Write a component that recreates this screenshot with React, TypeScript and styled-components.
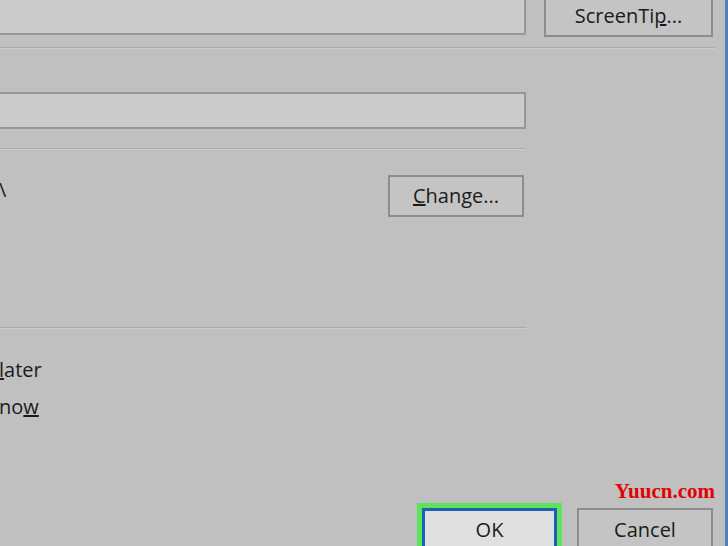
import styled, { createGlobalStyle } from 'styled-components';

const GlobalStyle = createGlobalStyle`
  html, body {
    margin: 0;
    padding: 0;
    background: #c0c0c0;
    overflow: hidden;
  }
`;

const Page = styled.div`
  width: 728px;
  height: 546px;
  display: flex;
  overflow: hidden;
  background: #c0c0c0;
  font-family: 'Open Sans', 'Noto Sans', sans-serif;
  font-size: 20px;
  font-weight: 500;
  color: #1b1b1b;
`;

const Dialog = styled.div`
  flex: 1;
  display: flex;
  flex-direction: column;
  border-right: 3px solid #4b82ba;
`;

const TopRow = styled.div`
  display: flex;
  align-items: flex-start;
  margin-top: -5px;
`;

const Field = styled.div<{ $height: number; $top?: number }>`
  width: 524px;
  height: ${(p) => p.$height}px;
  margin-top: ${(p) => p.$top ?? 0}px;
  background: #cbcbcb;
  border: 2px solid #979797;
  border-left: none;
`;

const Button = styled.div<{ $width: number; $height?: number }>`
  width: ${(p) => p.$width}px;
  height: ${(p) => p.$height ?? 42}px;
  box-sizing: border-box;
  display: flex;
  align-items: center;
  justify-content: center;
  padding-bottom: 2px;
  background: #c4c4c4;
  border: 2px solid #8c8c8c;
  flex-shrink: 0;
`;

const DefaultButton = styled(Button)`
  background: #e0e0e0;
  border: 3px solid #1b63b1;
  box-shadow: 0 0 0 5px #5de35d;
`;

const Separator = styled.div<{ $width: number; $top: number }>`
  width: ${(p) => p.$width}px;
  margin-top: ${(p) => p.$top}px;
  border-top: 1px solid #acacac;
  border-bottom: 1px solid #cdcdcd;
`;

const ChangeRow = styled.div`
  width: 524px;
  display: flex;
  justify-content: space-between;
  align-items: flex-start;
  margin-top: 25px;
`;

const PathText = styled.span`
  margin-top: 2px;
  margin-left: -1px;
  line-height: 26px;
`;

const Options = styled.div`
  display: flex;
  flex-direction: column;
  gap: 11px;
  margin-top: 28px;
`;

const Option = styled.span`
  line-height: 26px;
  margin-left: -1px;
`;

const Footer = styled.div`
  margin-top: auto;
  display: flex;
  flex-direction: column;
  align-items: flex-end;
  padding-right: 12px;
  margin-bottom: -6px;
`;

const Watermark = styled.span`
  font-family: 'Liberation Serif', 'DejaVu Serif', serif;
  font-weight: bold;
  font-size: 21px;
  line-height: 20px;
  color: #e00000;
  margin-right: -2px;
  margin-bottom: 7px;
`;

const ButtonRow = styled.div`
  display: flex;
  gap: 20px;
`;

export default function App() {
  return (
    <>
      <GlobalStyle />
      <Page>
        <Dialog>
          <TopRow>
            <Field $height={34} $top={2} />
            <Button $width={169} style={{ marginLeft: 18 }}>
              <span>
                ScreenTi<u>p</u>...
              </span>
            </Button>
          </TopRow>
          <Separator $width={715} $top={10} />
          <Field $height={33} $top={43} />
          <Separator $width={526} $top={19} />
          <ChangeRow>
            <PathText>\</PathText>
            <Button $width={136}>
              <span>
                <u>C</u>hange...
              </span>
            </Button>
          </ChangeRow>
          <Separator $width={526} $top={110} />
          <Options>
            <Option>
              <u>l</u>ater
            </Option>
            <Option>
              no<u>w</u>
            </Option>
          </Options>
          <Footer>
            <Watermark>Yuucn.com</Watermark>
            <ButtonRow>
              <DefaultButton $width={135} $height={44}>
                OK
              </DefaultButton>
              <Button $width={136} $height={44}>
                Cancel
              </Button>
            </ButtonRow>
          </Footer>
        </Dialog>
      </Page>
    </>
  );
}
